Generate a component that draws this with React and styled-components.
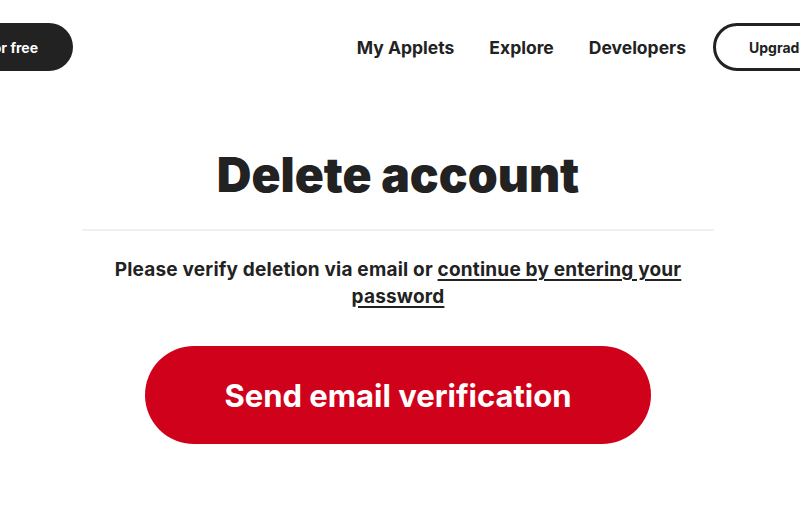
import React from 'react';
import styled, { createGlobalStyle } from 'styled-components';

const GlobalStyle = createGlobalStyle`
  html, body {
    margin: 0;
    padding: 0;
    background: #fff;
    overflow: hidden;
  }
  body {
    font-family: Inter, "Noto Sans", "Liberation Sans", sans-serif;
    color: #222;
  }
`;

const Page = styled.div`
  width: 800px;
  height: 507px;
  overflow: hidden;
`;

const Header = styled.header`
  display: flex;
  align-items: center;
  height: 48px;
  padding-top: 23px;
  white-space: nowrap;
`;

const PillButton = styled.a`
  display: flex;
  align-items: center;
  flex-shrink: 0;
  height: 48px;
  box-sizing: border-box;
  border-radius: 24px;
  font-size: 14px;
  font-weight: 700;
  text-decoration: none;
  cursor: pointer;
`;

const TrialButton = styled(PillButton)`
  width: 180px;
  margin-left: -107px;
  justify-content: flex-end;
  padding-right: 35px;
  background: #222;
  color: #fff;
`;

const Nav = styled.nav`
  display: flex;
  align-items: center;
  margin-left: auto;
  gap: 35px;
`;

const NavLink = styled.a`
  font-size: 17.5px;
  font-weight: 700;
  color: #222;
  text-decoration: none;
`;

const UpgradeButton = styled(PillButton)`
  margin-left: 27px;
  margin-right: -58px;
  width: 145px;
  padding-left: 33px;
  border: 3px solid #222;
  background: #fff;
  color: #222;
`;

const Main = styled.main`
  width: 632px;
  margin-left: 82px;
  display: flex;
  flex-direction: column;
  align-items: center;
`;

const Title = styled.h1`
  margin: 72px 0 0;
  font-size: 48px;
  line-height: 64px;
  font-weight: 900;
  color: #222;
`;

const Divider = styled.hr`
  align-self: stretch;
  height: 2px;
  margin: 22px 0 0;
  border: none;
  background: #f0f0f0;
`;

const Notice = styled.p`
  width: 600px;
  margin: 25px 0 0;
  text-align: center;
  font-size: 19px;
  line-height: 27px;
  font-weight: 700;
  letter-spacing: 0.2px;
  color: #222;

  a {
    color: #222;
    text-decoration: underline;
    text-underline-offset: 3px;
    text-decoration-thickness: 2px;
  }
`;

const SubmitButton = styled.button`
  width: 506px;
  height: 98px;
  margin-top: 36px;
  border: none;
  border-radius: 49px;
  background: #d0021b;
  color: #fff;
  font-family: inherit;
  font-size: 31px;
  font-weight: 700;
  cursor: pointer;
`;

export default function App() {
  return (
    <Page>
      <GlobalStyle />
      <Header>
        <TrialButton>Try Pro for free</TrialButton>
        <Nav>
          <NavLink>My Applets</NavLink>
          <NavLink>Explore</NavLink>
          <NavLink>Developers</NavLink>
        </Nav>
        <UpgradeButton>Upgrade</UpgradeButton>
      </Header>
      <Main>
        <Title>Delete account</Title>
        <Divider />
        <Notice>
          Please verify deletion via email or{' '}
          <a href="#">continue by entering your password</a>
        </Notice>
        <SubmitButton>Send email verification</SubmitButton>
      </Main>
    </Page>
  );
}
